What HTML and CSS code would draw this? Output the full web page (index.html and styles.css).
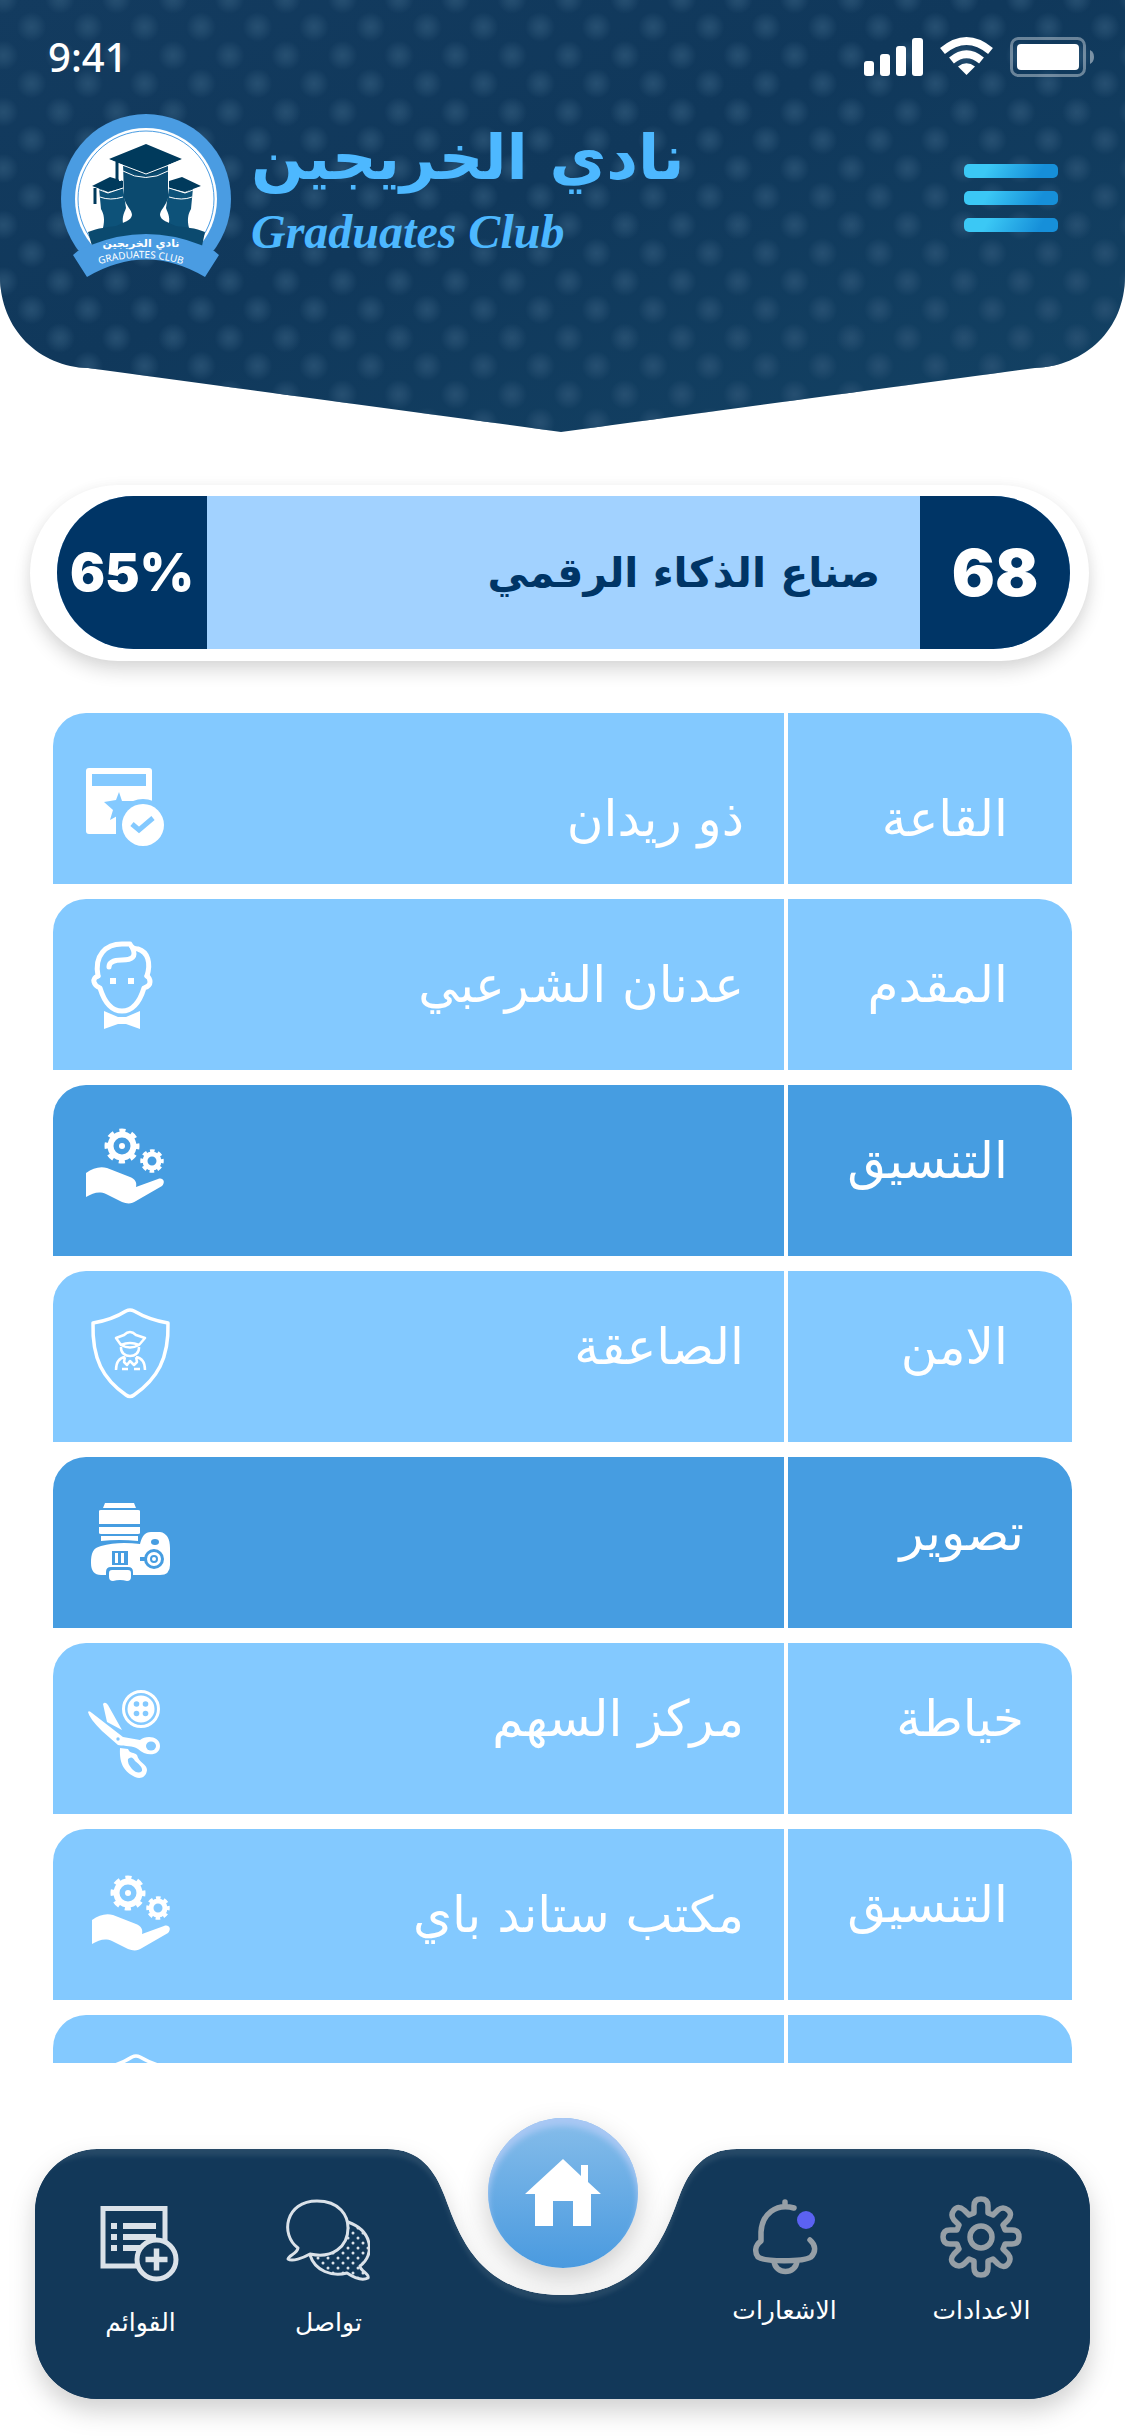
FILE: index.html
```html
<!DOCTYPE html>
<html lang="ar" dir="rtl">
<head>
<meta charset="utf-8">
<meta name="viewport" content="width=device-width, initial-scale=1">
<title>نادي الخريجين</title>
<link rel="stylesheet" href="styles.css">
</head>
<body>
<svg class="defs" aria-hidden="true">
  <defs>
    <symbol id="care" viewBox="0 0 100 100">
      <g fill="none" stroke="#fff">
        <circle cx="42" cy="25" r="11.500" stroke-width="6"/>
        <circle cx="42" cy="25" r="15.500" stroke-width="4" stroke-dasharray="6.200 5.970" stroke-dashoffset="3.100"/>
        <circle cx="72" cy="40" r="7" stroke-width="5"/>
        <circle cx="72" cy="40" r="10" stroke-width="3.500" stroke-dasharray="4.500 3.350" stroke-dashoffset="2.250"/>
      </g>
      <circle cx="42" cy="25" r="3" fill="#fff"/>
      <path fill="#fff" d="M6 52C13 47 20 45 27 47L50 56C55 58 57 61 56 66L78 58C83 56 86 61 82 65L56 80C52 83 47 83 42 81L26 73C19 70 13 72 6 76Z"/>
    </symbol>
    <symbol id="guard" viewBox="0 0 100 100">
      <g fill="none" stroke="#fff" stroke-linejoin="round">
        <path stroke-width="3.500" d="M46 4Q50 2 54 4C66 11 76 14 88 16C89 52 77 72 54 88Q50 91 46 88C23 72 12 52 13 16C25 14 35 11 46 4Z"/>
        <path stroke-width="2.500" d="M36 31L44 28Q50 22 56 28L65 31L59 38Q50 34 41 38ZM41 38Q50 43 59 38M41 40C40 52 60 52 59 40"/>
        <path stroke-width="2.500" d="M36 63C36 55 39 51 45 50M65 63C65 55 62 51 56 50M45 50L44 55L47 58L50 54L54 58L57 55L56 50M42 62H48M54 62H60"/>
      </g>
    </symbol>
  </defs>
</svg>

<div class="app">
  <header class="header" dir="ltr">
    <svg class="header-shape" viewBox="0 0 1125 432" preserveAspectRatio="none" aria-hidden="true">
      <defs>
        <linearGradient id="navy" x1="0" y1="0" x2="1" y2="1">
          <stop offset="0" stop-color="#133b5f"/><stop offset=".45" stop-color="#10385b"/><stop offset="1" stop-color="#134264"/>
        </linearGradient>
        <radialGradient id="dot">
          <stop offset="0" stop-color="#264f71"/><stop offset=".4" stop-color="#264f71" stop-opacity=".7"/><stop offset="1" stop-color="#264f71" stop-opacity="0"/>
        </radialGradient>
        <pattern id="dots" width="56.500" height="56.500" x="3.500" y="-1" patternUnits="userSpaceOnUse">
          <circle cx="28" cy="28" r="15" fill="url(#dot)"/>
          <circle cx="0" cy="0" r="15" fill="url(#dot)"/><circle cx="56.500" cy="0" r="15" fill="url(#dot)"/>
          <circle cx="0" cy="56.500" r="15" fill="url(#dot)"/><circle cx="56.500" cy="56.500" r="15" fill="url(#dot)"/>
        </pattern>
        <path id="hood" d="M0 0H1125V276C1125 330 1085 366 1035 368L561 432L88 368C40 367 0 330 0 276Z"/>
      </defs>
      <use href="#hood" fill="url(#navy)"/>
      <use href="#hood" fill="url(#dots)"/>
    </svg>

    <div class="status">
      <span class="clock">9:41</span>
      <svg class="status-icons" viewBox="864 36 231 42" role="img" aria-label="Signal, Wi-Fi, battery">
        <g fill="#fff">
          <rect x="864" y="61" width="10" height="15" rx="3"/><rect x="880" y="54" width="10" height="22" rx="3"/>
          <rect x="896" y="46" width="10" height="30" rx="3"/><rect x="912" y="38" width="11" height="38" rx="3"/>
          <path d="M966.500 75L958 66.500Q966.500 60 975 66.500Z"/>
          <rect x="1017" y="44" width="62" height="26" rx="4"/>
        </g>
        <g fill="none" stroke="#fff" stroke-width="7.500">
          <path d="M942.500 51Q966.500 31 990.500 51"/><path d="M951.500 60.500Q966.500 48 981.500 60.500"/>
        </g>
        <rect x="1011.500" y="38.500" width="73" height="37" rx="7" fill="none" stroke="#fff" stroke-opacity=".38" stroke-width="3"/>
        <path d="M1090 50Q1094 52 1094 57T1090 64Z" fill="#fff" fill-opacity=".45"/>
      </svg>
    </div>

    <div class="brand">
      <svg class="logo" viewBox="61 114 170 164" role="img" aria-label="Graduates Club">
        <defs><clipPath id="badge"><rect x="61" y="114" width="170" height="136"/></clipPath></defs>
        <g clip-path="url(#badge)">
          <circle cx="146" cy="199" r="85" fill="#4a9ce2"/>
          <circle cx="146" cy="199" r="71" fill="#fff"/>
          <circle cx="146" cy="199" r="68" fill="none" stroke="#4a9ce2"/>
        </g>
        <path fill="#0d5279" d="M99 188L107 193L123 188L126 208C124 214 121 217 124 228H103C105 220 104 214 101 209ZM193 188L185 193L169 188L166 208C168 214 171 217 168 228H189C187 220 188 214 191 209Z"/>
        <path fill="#0b4a6f" d="M88 232C98 228 108 227 116 226C124 222 131 221 132 215C132 210 126 206 124 198L123 163H168V198C166 206 160 210 160 215C161 221 168 222 176 226C184 227 196 228 205 232L202 246H92Z"/>
        <path fill="#003a5c" d="M146 144L182 159L168 165Q146 183 123 165L109 159ZM92 186L110 177L123 181V188L108 192ZM201 186L182 177L169 181V188L185 192Z"/>
        <path fill="none" stroke="#fff" d="M109 160L146 174L182 160M123 171Q146 184 168 171M92 187L108 193L123 188M201 187L185 193L169 188M100 197Q110 201 123 197M192 197Q182 201 169 197"/>
        <path fill="none" stroke="#fff" stroke-width="2" d="M120 164V181"/>
        <path fill="none" stroke="#003a5c" stroke-width="3" d="M95 188V204M117 162V183"/>
        <path fill="#4a9ce2" d="M79 250L91 245Q146 223 201 245L213 250L219 255L205 277Q146 242 87 277L73 255Z"/>
        <text class="logo-ar" x="141" y="247" text-anchor="middle">نادي الخريجين</text>
        <path id="arc" fill="none" d="M94 266Q141 250 188 266"/>
        <text class="logo-en" text-anchor="middle"><textPath href="#arc" startOffset="50%">GRADUATES CLUB</textPath></text>
      </svg>
      <h1 class="names">
        <span class="name-ar" lang="ar" dir="rtl">نادي الخريجين</span>
        <span class="name-en" lang="en">Graduates Club</span>
      </h1>
      <button class="menu" type="button" aria-label="القائمة"><span></span><span></span><span></span></button>
    </div>
  </header>

  <main class="main">
    <section class="batch">
      <div class="batch-track">
        <strong class="batch-no">68</strong>
        <h2 class="batch-title">صناع الذكاء الرقمي</h2>
        <strong class="batch-done" dir="ltr">65%</strong>
      </div>
    </section>

    <dl class="list">
      <div class="row">
        <dt class="label low">القاعة</dt>
        <dd class="value low">ذو ريدان</dd>
        <dd class="pic"><svg class="icon" viewBox="0 0 100 100" aria-hidden="true">
          <rect x="6" y="19" width="66" height="66" rx="3" fill="#fff"/>
          <g class="cut"><rect x="12" y="25" width="54" height="12"/><path d="M39 43L42 52H54L46 60L48 70L39 66L30 71L33 61L24 53L36 51Z"/><path d="M36 66H60V86H36Z"/><circle cx="63" cy="76" r="26"/></g>
          <circle cx="63" cy="76" r="21" fill="#fff"/>
          <path class="cut-line" stroke-width="5" d="M52 75L59 81L73 69"/>
        </svg></dd>
      </div>
      <div class="row">
        <dt class="label mid">المقدم</dt>
        <dd class="value mid">عدنان الشرعبي</dd>
        <dd class="pic"><svg class="icon" viewBox="0 0 100 100" aria-hidden="true">
          <g fill="none" stroke="#fff" stroke-width="5" stroke-linecap="round" stroke-linejoin="round">
            <path d="M18 41C14 20 26 9 42 9H50C52 13 54 14 58 14C68 17 71 28 67 41"/>
            <path d="M52 12C57 22 52 25 42 25C34 25 29 27 29 32"/>
            <path d="M18 41Q13 43 14 47T20 53C24 66 31 76 42 76S60 66 64 53Q70 51 70 47T67 41"/>
          </g>
          <path fill="#fff" d="M30 43H36V49H30ZM48 43H54V49H48ZM24 76L38 82H46L60 76V94L46 89H38L24 94Z"/>
        </svg></dd>
      </div>
      <div class="row dark">
        <dt class="label">التنسيق</dt>
        <dd class="value"></dd>
        <dd class="pic"><svg class="icon" viewBox="0 0 100 100" aria-hidden="true"><use href="#care" width="100" height="100"/></svg></dd>
      </div>
      <div class="row">
        <dt class="label">الامن</dt>
        <dd class="value">الصاعقة</dd>
        <dd class="pic"><svg class="icon" viewBox="0 0 100 100" aria-hidden="true"><use href="#guard" width="100" height="100"/></svg></dd>
      </div>
      <div class="row dark">
        <dt class="label wide">تصوير</dt>
        <dd class="value"></dd>
        <dd class="pic"><svg class="icon" viewBox="0 0 100 100" aria-hidden="true">
          <path fill="#fff" d="M25 10H54L56 15H23ZM19 18Q19 17 21 17H58Q60 17 60 18V31H19ZM19 34H60V40Q60 41 58 41H21Q19 41 19 40ZM21 43H58V48Q39 46 21 48Z"/>
          <path fill="#fff" d="M21 53Q38 48 60 51C62 43 65 39 71 39H80C87 40 90 46 90 55V72Q90 82 80 82H21Q11 82 11 70C11 60 13 55 21 53Z"/>
          <g class="cut"><path d="M32 58H48V72H32ZM26 83V79Q26 74 31 74H48Q53 74 53 79V83Z"/><ellipse cx="75" cy="49" rx="4" ry="3"/><circle cx="74" cy="66" r="10"/><path d="M60 64H66V68H60Z"/></g>
          <path fill="#fff" d="M35 60H38V70H35ZM41 60H44V70H41ZM29 80Q29 77 32 77H48Q51 77 51 80V84Q51 88 47 88Q40 86 33 88Q29 88 29 84Z"/>
          <circle cx="74" cy="66" r="5.500" fill="none" stroke="#fff" stroke-width="3"/><circle cx="74" cy="66" r="2" fill="#fff"/>
        </svg></dd>
      </div>
      <div class="row">
        <dt class="label wide">خياطة</dt>
        <dd class="value">مركز السهم</dd>
        <dd class="pic"><svg class="icon" viewBox="0 0 100 100" aria-hidden="true">
          <circle cx="61" cy="30" r="17.500" fill="none" stroke="#fff" stroke-width="3"/><circle cx="61" cy="30" r="13.500" fill="#fff"/>
          <g class="cut"><circle cx="56.500" cy="25" r="2.800"/><circle cx="65.500" cy="25" r="2.800"/><circle cx="56.500" cy="34.500" r="2.800"/><circle cx="65.500" cy="34.500" r="2.800"/></g>
          <path fill="#fff" d="M23 25Q25 22 28 26L42 51L27 43ZM8 33Q9 31 12 34L43 58L60 61C66 56 80 57 80 67C80 77 66 78 58 70C52 66 46 68 38 66L22 52Q9 39 8 33Z"/>
          <path fill="#fff" d="M40 69L48 70C50 75 54 73 57 76C59 84 67 85 67 91C66 99 60 100 55 98C45 93 39 86 40 69Z"/>
          <g class="cut"><ellipse cx="71" cy="67" rx="5" ry="4.500"/><circle cx="38" cy="60" r="1.700"/><path d="M48 80Q52 76 55 82Q63 88 62 92Q58 96 52 90Q47 84 48 80Z"/></g>
        </svg></dd>
      </div>
      <div class="row">
        <dt class="label">التنسيق</dt>
        <dd class="value mid">مكتب ستاند باي</dd>
        <dd class="pic"><svg class="icon" viewBox="-6 -3 100 100" aria-hidden="true"><use href="#care" width="100" height="100"/></svg></dd>
      </div>
      <div class="row">
        <dt class="label"></dt>
        <dd class="value"></dd>
        <dd class="pic"><svg class="icon" viewBox="-6 -2 100 100" aria-hidden="true"><use href="#guard" width="100" height="100"/></svg></dd>
      </div>
    </dl>
  </main>

  <nav class="nav" aria-label="التنقل">
    <svg class="nav-shape" viewBox="0 0 1055 250" preserveAspectRatio="none" aria-hidden="true">
      <defs>
        <path id="tray" d="M62 0H352C385 0 400 21 410 48C423 83 443 146 527 146S631 83 644 48C654 21 669 0 702 0H993A62 62 0 0 1 1055 62V188A62 62 0 0 1 993 250H62A62 62 0 0 1 0 188V62A62 62 0 0 1 62 0Z"/>
        <clipPath id="trayClip"><use href="#tray"/></clipPath>
        <filter id="soft" x="-5%" y="-5%" width="110%" height="115%" color-interpolation-filters="sRGB"><feGaussianBlur stdDeviation="2"/></filter>
      </defs>
      <g clip-path="url(#trayClip)">
        <use href="#tray" fill="#264967"/>
        <path fill="#123859" filter="url(#soft)" d="M62 7H352C385 7 400 28 410 55C423 90 443 153 527 153S631 90 644 55C654 28 669 7 702 7H993Q1060 7 1060 69V270H-5V69Q-5 7 62 7Z"/>
      </g>
    </svg>
    <a class="home" href="#home" aria-label="الرئيسية">
      <svg viewBox="0 0 76 68" aria-hidden="true"><path fill="#fff" d="M38 0L56 17V6H63V23L76 35H66V67H48V42H28V67H10V35H0Z"/></svg>
    </a>
    <ul class="tabs">
      <li class="tab">
        <a href="#settings">
          <svg class="tab-icon" viewBox="-42 -42 84 84" aria-hidden="true">
            <g fill="none" stroke="#969fa6" stroke-width="5.500" stroke-linejoin="round">
              <circle r="11"/>
              <path d="M-7 -24L-7 -31Q-7 -38 0 -38T7 -31L7 -24L12 -22L17 -27Q22 -31 27 -27T27 -17L22 -12L24 -7L31 -7Q38 -7 38 0T31 7L24 7L22 12L27 17Q31 22 27 27T17 27L12 22L7 24L7 31Q7 38 0 38T-7 31L-7 24L-12 22L-17 27Q-22 31 -27 27T-27 17L-22 12L-24 7L-31 7Q-38 7 -38 0T-31 -7L-24 -7L-22 -12L-27 -17Q-31 -22 -27 -27T-17 -27L-12 -22Z"/>
            </g>
          </svg>
          <span>الاعدادات</span>
        </a>
      </li>
      <li class="tab">
        <a href="#alerts">
          <svg class="tab-icon" viewBox="743 2195 84 84" aria-hidden="true">
            <g fill="none" stroke="#969fa6" stroke-width="5.500" stroke-linecap="round" stroke-linejoin="round">
              <path d="M794 2208C776 2203 762 2214 761 2232V2241C754 2246 755 2253 758 2257C765 2262 803 2262 811 2257C816 2252 816 2245 810 2240M785 2206V2202"/>
              <path d="M774 2261C775 2275 796 2275 797 2261"/>
            </g>
            <circle cx="806" cy="2220" r="9" fill="#5b62f2"/>
          </svg>
          <span>الاشعارات</span>
        </a>
      </li>
      <li class="gap" aria-hidden="true"></li>
      <li class="tab drop">
        <a href="#chat">
          <svg class="tab-icon" viewBox="285 2198 84 84" aria-hidden="true">
            <defs><pattern id="speck" width="10" height="10" patternUnits="userSpaceOnUse"><circle cx="2" cy="2" r="1.500" fill="#dbe2e9"/><circle cx="7" cy="7" r="1.500" fill="#dbe2e9"/></pattern></defs>
            <g stroke="#dbe2e9" stroke-width="3" stroke-linejoin="round">
              <path fill="url(#speck)" d="M347 2221C372 2230 374 2254 359 2265C359 2270 369 2273 367 2277C361 2280 352 2276 346 2272C331 2276 314 2270 309 2254Z"/>
              <path fill="#123859" d="M297 2247C279 2234 284 2200 316 2200C339 2200 347 2215 347 2227C347 2246 331 2258 309 2253C302 2257 291 2261 287 2258C288 2254 296 2253 297 2247Z"/>
            </g>
          </svg>
          <span>تواصل</span>
        </a>
      </li>
      <li class="tab drop">
        <a href="#lists">
          <svg class="tab-icon" viewBox="99 2203 84 84" aria-hidden="true">
            <rect x="104" y="2212.500" width="62" height="57.500" fill="none" stroke="#dbe2e9" stroke-width="5"/>
            <path fill="#dbe2e9" d="M112 2227H118V2233H112ZM112 2238H118V2244H112ZM112 2249H118V2255H112ZM124 2227H157V2233H124ZM124 2238H157V2244H124ZM124 2249H148V2255H124Z"/>
            <circle cx="157.500" cy="2263.500" r="19.500" fill="#123859" stroke="#dbe2e9" stroke-width="5"/>
            <path stroke="#dbe2e9" stroke-width="5.500" d="M146.500 2263.500H168.500M157.500 2252.500V2274.500"/>
          </svg>
          <span>القوائم</span>
        </a>
      </li>
    </ul>
  </nav>
</div>
</body>
</html>
```

FILE: styles.css
```css
* { box-sizing: border-box; }

body {
  margin: 0;
  background: #fff;
  color: #fff;
  font-family: "DejaVu Sans", sans-serif;
}

h1, h2, dl, dd, ul { margin: 0; padding: 0; }
ul { list-style: none; }
a { color: inherit; text-decoration: none; }
svg { display: block; }

.defs { position: absolute; width: 0; height: 0; }

.app {
  display: flex;
  flex-direction: column;
  height: 100vh;
}

/* Header */
.header {
  position: relative;
  flex: none;
  padding-bottom: 154px;
}
.header-shape {
  position: absolute;
  inset: 0;
  width: 100%;
  height: 100%;
}
.status {
  position: relative;
  display: flex;
  align-items: center;
  justify-content: space-between;
  height: 114px;
  padding: 0 30px 0 48px;
}
.clock {
  font: 500 40px/40px "Noto Sans", sans-serif;
}
.status-icons { width: 231px; height: 42px; }
.brand {
  position: relative;
  display: flex;
  align-items: flex-start;
  padding: 0 67px 0 61px;
}
.logo { width: 170px; height: 164px; }
.logo-ar { font: bold 11px "DejaVu Sans", sans-serif; fill: #fff; }
.logo-en { font: 10px "Noto Sans", sans-serif; fill: #fff; }
.names {
  display: flex;
  flex: 1;
  flex-direction: column;
  align-items: flex-start;
  padding-left: 20px;
  color: #4db8ff;
}
.name-ar { font: bold 62px/88px "DejaVu Sans", sans-serif; }
.name-en { font: italic bold 48px/60px "Liberation Serif", serif; }
.menu {
  display: flex;
  flex-direction: column;
  gap: 13px;
  margin-top: 50px;
  padding: 0;
  border: 0;
  background: none;
}
.menu span {
  width: 94px;
  height: 14px;
  border-radius: 5px;
  background: linear-gradient(120deg, #3bc8f5 25%, #168fd9 80%);
}

/* Batch summary */
.main {
  display: flex;
  flex: 1;
  flex-direction: column;
  min-height: 0;
}
.batch {
  flex: none;
  margin: 53px 36px 52px 30px;
  padding: 11px 19px 12px 27px;
  border-radius: 88px;
  background: #fff;
  box-shadow: 0 10px 18px rgba(0, 0, 0, .14), 0 0 14px rgba(0, 0, 0, .04);
}
.batch-track {
  display: flex;
  align-items: stretch;
  height: 153px;
  overflow: hidden;
  border-radius: 77px;
  background: #a2d2ff;
  color: #003566;
}
.batch-no, .batch-done {
  display: flex;
  flex: none;
  align-items: center;
  justify-content: center;
  width: 150px;
  background: #003566;
  color: #fff;
  font: 900 64px/80px Inter, sans-serif;
}
.batch-done { font-size: 52px; }
.batch-title {
  flex: 1;
  align-self: center;
  padding: 0 40px;
  font: bold 41px/64px "DejaVu Sans", sans-serif;
}

/* Details list */
.list {
  display: flex;
  flex: 1;
  flex-direction: column;
  gap: 15px;
  min-height: 0;
  margin: 0 53px;
  overflow: hidden;
}
.row {
  --tone: #83c9ff;
  display: flex;
  flex: none;
  align-items: flex-start;
  height: 171px;
  border-radius: 33px 33px 0 0;
  background: var(--tone);
  font-size: 50px;
  line-height: 80px;
}
.dark { --tone: #469de1; }
.label {
  align-self: stretch;
  width: 288px;
  padding: 36px 64px 0 0;
  border-left: 4px solid #fff;
}
.value {
  flex: 1;
  align-self: stretch;
  padding: 36px 40px 0 0;
}
.wide { padding-right: 48px; }
.mid { padding-top: 46px; }
.low { padding-top: 66px; }
.pic { padding: 36px 0 0 27px; }
.icon { width: 100px; height: 100px; }
.cut { fill: var(--tone); }
.cut-line { fill: none; stroke: var(--tone); }

/* Bottom navigation */
.nav {
  position: relative;
  flex: none;
  height: 250px;
  margin: 86px 35px 37px;
}
.nav-shape {
  position: absolute;
  inset: 0;
  width: 100%;
  height: 100%;
  filter: drop-shadow(0 12px 12px rgba(0, 0, 0, .18));
}
.home {
  position: absolute;
  top: -31px;
  left: 50%;
  display: flex;
  align-items: center;
  justify-content: center;
  width: 150px;
  height: 150px;
  margin-left: -75px;
  border-radius: 50%;
  background: linear-gradient(#86bdea, #4a9adf);
  box-shadow: inset 0 8px 6px #a9c8f4, 0 12px 30px rgba(0, 0, 0, .2);
}
.home svg { width: 76px; height: 68px; }
.tabs {
  position: relative;
  display: grid;
  grid-template-columns: 216fr 176fr 274fr 184fr 190fr;
  height: 100%;
  padding-left: 10px;
  pointer-events: none;
}
.tab { padding-top: 46px; pointer-events: auto; }
.drop { padding-top: 50px; }
.tab a {
  display: flex;
  flex-direction: column;
  align-items: center;
  gap: 16px;
  font-size: 25px;
  line-height: 32px;
}
.drop a { gap: 24px; }
.tab-icon { width: 84px; height: 84px; }
```
